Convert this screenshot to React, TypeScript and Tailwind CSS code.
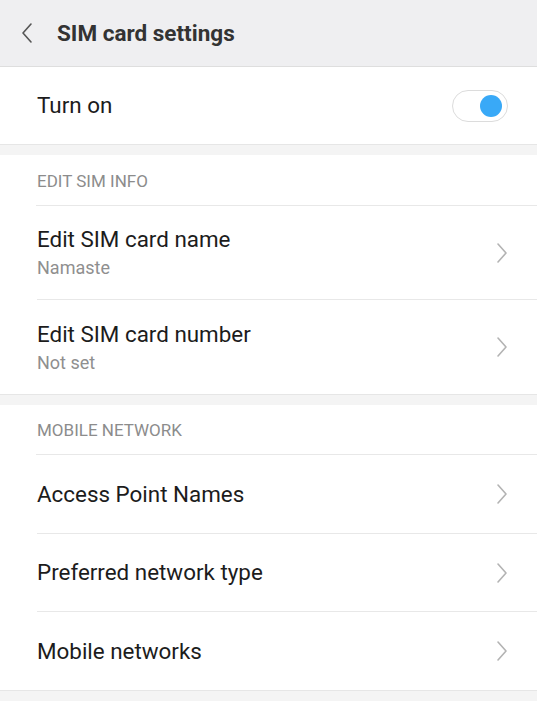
import React from "react";

const font = { fontFamily: "Roboto, 'Noto Sans', sans-serif" };

function Chevron() {
  return (
    <svg width="12" height="22" viewBox="0 0 12 22" className="shrink-0">
      <path d="M2 2 L10 11 L2 20" fill="none" stroke="#b3b3b3" strokeWidth="1.6" strokeLinecap="round" strokeLinejoin="round" />
    </svg>
  );
}

function Gap() {
  return <div className="h-[11px] bg-[#f4f4f4] border-t border-[#e6e6e6]" />;
}

function Row({ title, sub, h, last }: { title: string; sub?: string; h: string; last?: boolean }) {
  return (
    <div className="pl-[37px]">
      <div className={`${h} flex items-center pr-[29px] ${last ? "" : "border-b border-[#e8e8e8]"}`}>
        <div className="flex-1 flex flex-col">
          <span className="text-[22.4px] text-[#1c1c1c] leading-[27px]">{title}</span>
          {sub && <span className="text-[18px] text-[#8f8f8f] leading-[22px] mt-[4px]">{sub}</span>}
        </div>
        <Chevron />
      </div>
    </div>
  );
}

export default function App() {
  return (
    <div className="w-[537px] h-[701px] bg-white overflow-hidden" style={font}>
      <div className="h-[67px] bg-[#efeff1] border-b border-[#dedede] flex items-center">
        <svg width="14" height="22" viewBox="0 0 14 22" className="ml-[20px]">
          <path d="M11 2 L3 11 L11 20" fill="none" stroke="#555" strokeWidth="1.6" strokeLinecap="round" strokeLinejoin="round" />
        </svg>
        <span className="ml-[23px] text-[22.5px] font-bold text-[#333] mt-[1px]">SIM card settings</span>
      </div>
      <div className="h-[77px] flex items-center pl-[37px] pr-[29px]">
        <span className="flex-1 text-[22.4px] text-[#1c1c1c]">Turn on</span>
        <div className="w-[56px] h-[32px] rounded-full border border-[#dcdcdc] bg-white flex items-center justify-end pr-[5px]">
          <div className="w-[22px] h-[22px] rounded-full bg-[#39a9f7]" />
        </div>
      </div>
      <Gap />
      <div>
        <div className="h-[50px] flex items-center pl-[37px] pt-[3px]">
          <span className="text-[17px] text-[#8c8c8c]">EDIT SIM INFO</span>
        </div>
        <div className="ml-[36px] border-t border-[#e8e8e8]" />
        <Row title="Edit SIM card name" sub="Namaste" h="h-[94px]" />
        <Row title="Edit SIM card number" sub="Not set" h="h-[94px]" last />
      </div>
      <Gap />
      <div>
        <div className="h-[49px] flex items-center pl-[37px] pt-[2px]">
          <span className="text-[17px] text-[#8c8c8c]">MOBILE NETWORK</span>
        </div>
        <div className="ml-[36px] border-t border-[#e8e8e8]" />
        <Row title="Access Point Names" h="h-[79px]" />
        <Row title="Preferred network type" h="h-[78px]" />
        <Row title="Mobile networks" h="h-[78px]" last />
      </div>
      <Gap />
    </div>
  );
}
